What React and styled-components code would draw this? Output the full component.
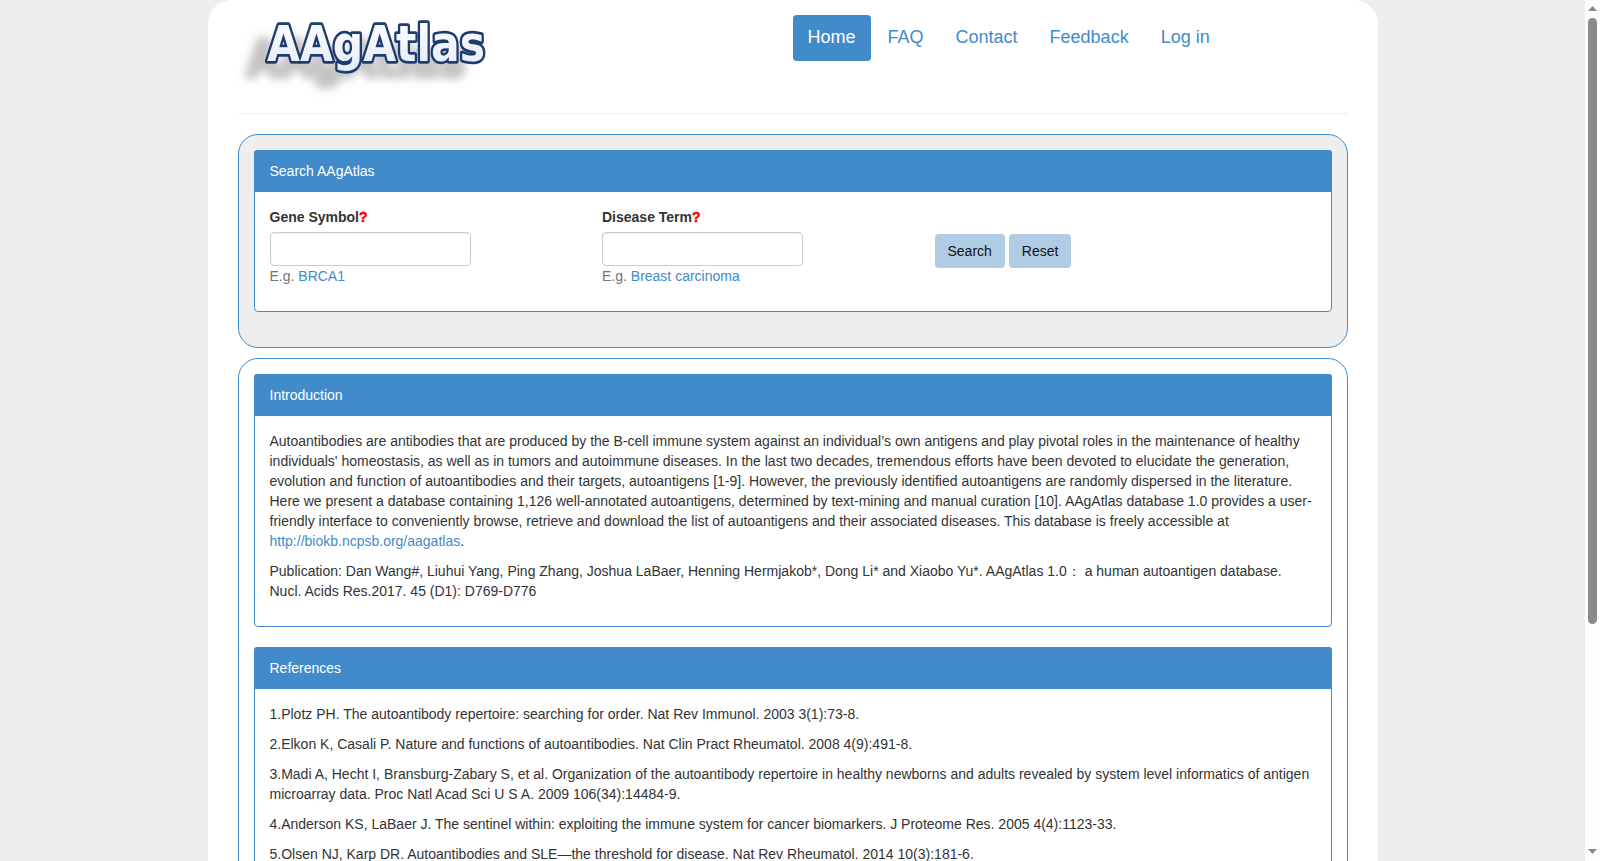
import styled, { createGlobalStyle } from "styled-components"

const GlobalStyle = createGlobalStyle`
  * { box-sizing: border-box; }
  html, body { height: 100%; margin: 0; }
  body {
    overflow: hidden;
    background: #eee;
    color: #333;
    font-family: "Liberation Sans", Arial, sans-serif;
    font-size: 14px;
    line-height: 20px;
  }
  a { color: #428bca; text-decoration: none; }
  p { margin: 0 0 10px; }
`

const Page = styled.div`
  display: flex;
  height: 861px;
  overflow: hidden;
`

const Main = styled.div`
  flex: 1;
  min-width: 0;
  overflow: hidden;
`

const Container = styled.div`
  width: 1170px;
  min-height: 100%;
  margin: 0 auto;
  padding: 0 30px;
  background: #fff;
  border-radius: 24px 24px 0 0;
`

const Header = styled.header`
  display: flex;
  height: 114px;
  border-bottom: 1px solid #eee;
  margin-bottom: 20px;
`

const LogoBox = styled.div`
  width: 555px;
  flex: none;
`

const Nav = styled.nav`
  display: flex;
  gap: 2px;
  padding-top: 15px;
  align-items: flex-start;
`

const NavLink = styled.a`
  display: block;
  padding: 9px 15px 11px;
  font-size: 18px;
  line-height: 26px;
  border-radius: 4px;
  color: ${(p) => (p.$active ? "#fff" : "#428bca")};
  background: ${(p) => (p.$active ? "#428bca" : "transparent")};
`

const Well = styled.section`
  padding: 15px;
  margin-bottom: 10px;
  border: 1px solid #428bca;
  border-radius: 20px;
  background: ${(p) => (p.$grey ? "#eee" : "#fff")};
`

const Panel = styled.div`
  margin-bottom: 20px;
  background: #fff;
  border: 1px solid #428bca;
  border-radius: 4px;
`

const PanelHeading = styled.div`
  height: 42px;
  padding: 11px 16px 11px;
  margin: -1px -1px 0;
  color: #fff;
  background: #428bca;
  border-radius: 3px 3px 0 0;
`

const PanelBody = styled.div`
  padding: 15px;
`

const SearchRow = styled.form`
  display: grid;
  grid-template-columns: 332.5px 332.5px 1fr;
`

const Field = styled.div`
  margin-bottom: 10px;
`

const Label = styled.label`
  display: block;
  margin-bottom: 5px;
  font-weight: 700;
`

const Hint = styled.span`
  color: red;
  -webkit-text-stroke: 0.5px red;
`

const Input = styled.input`
  display: block;
  width: 201px;
  height: 34px;
  padding: 6px 12px;
  border: 1px solid #ccc;
  border-radius: 4px;
  background: #fff;
  box-shadow: inset 0 1px 1px rgba(0, 0, 0, 0.075);
`

const Help = styled.div`
  color: #737373;
`

const Actions = styled.div`
  display: flex;
  gap: 4px;
  padding-top: 27px;
  align-items: flex-start;
`

const Button = styled.button`
  height: 34px;
  padding: 6px 12px;
  border: 1px solid transparent;
  border-radius: 4px;
  background: #b0cce5;
  color: #111;
  font: inherit;
`

const Scrollbar = styled.div`
  flex: none;
  width: 15px;
  display: flex;
  flex-direction: column;
  align-items: center;
  padding: 6px 0 7px;
  background: #fdfdfd;
`

const Thumb = styled.div`
  width: 9px;
  height: 606px;
  margin-top: 7px;
  background: #8a8a8a;
  border-radius: 5px;
`

const Arrow = styled.svg`
  display: block;
  width: 9px;
  height: 5px;
  fill: #8a8a8a;
  margin-top: ${(p) => (p.$pushed ? "auto" : "0")};
`

const Logo = () => (
  <svg width="310" height="100" viewBox="0 0 310 100">
    <defs>
      <filter id="logoShadow" x="-20%" y="-30%" width="130%" height="180%">
        <feDropShadow dx="-20" dy="15" stdDeviation="4" floodColor="#888" floodOpacity="0.5" />
      </filter>
      <linearGradient id="logoFill" x1="0" y1="0" x2="0" y2="1">
        <stop offset="0" stopColor="#fff" />
        <stop offset="1" stopColor="#e4ebf4" />
      </linearGradient>
    </defs>
    <text
      x="29"
      y="61"
      fontFamily="DejaVu Sans"
      fontWeight="700"
      fontSize="50"
      textLength="218"
      lengthAdjust="spacingAndGlyphs"
      fill="url(#logoFill)"
      stroke="#1d3a6e"
      strokeWidth="5.5"
      strokeLinejoin="round"
      paintOrder="stroke"
      filter="url(#logoShadow)"
    >
      AAgAtlas
    </text>
  </svg>
)

const App = () => (
  <>
    <GlobalStyle />
    <Page>
      <Main>
        <Container>
          <Header>
            <LogoBox>
              <Logo />
            </LogoBox>
            <Nav>
              <NavLink href="#" $active>Home</NavLink>
              <NavLink href="#">FAQ</NavLink>
              <NavLink href="#">Contact</NavLink>
              <NavLink href="#">Feedback</NavLink>
              <NavLink href="#">Log in</NavLink>
            </Nav>
          </Header>

          <Well $grey>
            <Panel>
              <PanelHeading>Search AAgAtlas</PanelHeading>
              <PanelBody>
                <SearchRow>
                  <Field>
                    <Label>Gene Symbol<Hint>?</Hint></Label>
                    <Input type="text" />
                    <Help>E.g. <a href="#">BRCA1</a></Help>
                  </Field>
                  <Field>
                    <Label>Disease Term<Hint>?</Hint></Label>
                    <Input type="text" />
                    <Help>E.g. <a href="#">Breast carcinoma</a></Help>
                  </Field>
                  <Actions>
                    <Button type="button">Search</Button>
                    <Button type="button">Reset</Button>
                  </Actions>
                </SearchRow>
              </PanelBody>
            </Panel>
          </Well>

          <Well>
            <Panel>
              <PanelHeading>Introduction</PanelHeading>
              <PanelBody>
                <p>
                  Autoantibodies are antibodies that are produced by the B-cell immune system against an individual’s own antigens and play pivotal roles in the maintenance of healthy individuals' homeostasis, as well as in tumors and autoimmune diseases. In the last two decades, tremendous efforts have been devoted to elucidate the generation, evolution and function of autoantibodies and their targets, autoantigens [1-9]. However, the previously identified autoantigens are randomly dispersed in the literature. Here we present a database containing 1,126 well-annotated autoantigens, determined by text-mining and manual curation [10]. AAgAtlas database 1.0 provides a user-friendly interface to conveniently browse, retrieve and download the list of autoantigens and their associated diseases. This database is freely accessible at <a href="#">http://biokb.ncpsb.org/aagatlas</a>.
                </p>
                <p>
                  Publication: Dan Wang#, Liuhui Yang, Ping Zhang, Joshua LaBaer, Henning Hermjakob*, Dong Li* and Xiaobo Yu*. AAgAtlas 1.0： a human autoantigen database. Nucl. Acids Res.2017. 45 (D1): D769-D776
                </p>
              </PanelBody>
            </Panel>
            <Panel>
              <PanelHeading>References</PanelHeading>
              <PanelBody>
                <p>1.Plotz PH. The autoantibody repertoire: searching for order. Nat Rev Immunol. 2003 3(1):73-8.</p>
                <p>2.Elkon K, Casali P. Nature and functions of autoantibodies. Nat Clin Pract Rheumatol. 2008 4(9):491-8.</p>
                <p>3.Madi A, Hecht I, Bransburg-Zabary S, et al. Organization of the autoantibody repertoire in healthy newborns and adults revealed by system level informatics of antigen microarray data. Proc Natl Acad Sci U S A. 2009 106(34):14484-9.</p>
                <p>4.Anderson KS, LaBaer J. The sentinel within: exploiting the immune system for cancer biomarkers. J Proteome Res. 2005 4(4):1123-33.</p>
                <p>5.Olsen NJ, Karp DR. Autoantibodies and SLE—the threshold for disease. Nat Rev Rheumatol. 2014 10(3):181-6.</p>
              </PanelBody>
            </Panel>
          </Well>
        </Container>
      </Main>
      <Scrollbar>
        <Arrow viewBox="0 0 9 5"><polygon points="4.5,0 9,5 0,5" /></Arrow>
        <Thumb />
        <Arrow viewBox="0 0 9 5" $pushed><polygon points="0,0 9,0 4.5,5" /></Arrow>
      </Scrollbar>
    </Page>
  </>
)

export default App
